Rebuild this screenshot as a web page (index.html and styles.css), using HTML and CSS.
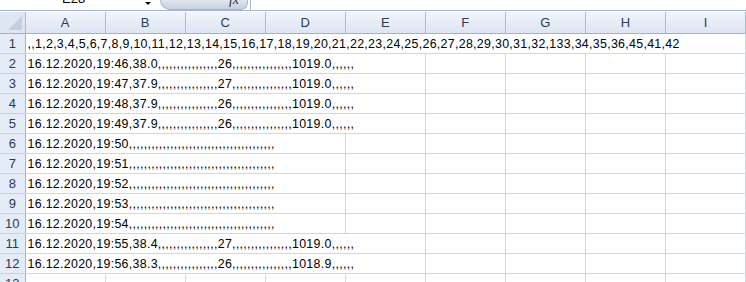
FILE: index.html
```html
<!DOCTYPE html>
<html lang="de">
<head>
    <meta charset="UTF-8">
    <meta name="viewport" content="width=device-width, initial-scale=1.0">
    <title>Tabelle</title>
    <link rel="stylesheet" href="styles.css">
</head>
<body>
    <div class="formula-bar">
        <div class="name-box">
            <span class="name-text">E28</span>
            <span class="name-arrow"></span>
        </div>
        <div class="fx-button"><span class="fx">fx</span></div>
        <div class="formula-input"></div>
    </div>

    <table class="sheet">
        <colgroup>
            <col class="col-head">
            <col><col><col><col><col><col><col><col><col>
        </colgroup>
        <thead>
            <tr>
                <th class="corner"><span class="corner-tri"></span></th>
                <th>A</th><th>B</th><th>C</th><th>D</th><th>E</th><th>F</th><th>G</th><th>H</th><th>I</th>
            </tr>
        </thead>
        <tbody id="rows"></tbody>
    </table>

    <script>
        // Zeilen der CSV-Datei, alles steht in Spalte A und läuft in die Nachbarzellen
        const empty = n => ','.repeat(n);
        const full = (time, temp, hum, press) =>
            '16.12.2020,' + time + ',' + temp + empty(16) + hum + empty(16) + press + empty(6);
        const blank = time => '16.12.2020,' + time + empty(39);

        // [Text, Anzahl der überdeckten Spalten]
        const lines = [
            [',,1,2,3,4,5,6,7,8,9,10,11,12,13,14,15,16,17,18,19,20,21,22,23,24,25,26,27,28,29,30,31,32,133,34,35,36,45,41,42', 9],
            [full('19:46', '38.0', '26', '1019.0'), 5],
            [full('19:47', '37.9', '27', '1019.0'), 5],
            [full('19:48', '37.9', '26', '1019.0'), 5],
            [full('19:49', '37.9', '26', '1019.0'), 5],
            [blank('19:50'), 4],
            [blank('19:51'), 4],
            [blank('19:52'), 4],
            [blank('19:53'), 4],
            [blank('19:54'), 4],
            [full('19:55', '38.4', '27', '1019.0'), 5],
            [full('19:56', '38.3', '26', '1018.9'), 5],
            ['', 1]
        ];

        const tbody = document.getElementById('rows');
        lines.forEach(([text, span], i) => {
            const tr = document.createElement('tr');
            tr.innerHTML = `<th class="row-num">${i + 1}</th><td class="text-cell" colspan="${span}">${text}</td>` +
                '<td></td>'.repeat(9 - span);
            tbody.appendChild(tr);
        });
    </script>
</body>
</html>
```

FILE: styles.css
```css
body {
    margin: 0;
    background-color: #fff;
    font-family: "Liberation Sans", Arial, sans-serif;
    overflow: hidden;
}

/* Formelleiste, oben abgeschnitten */
.formula-bar {
    display: flex;
    height: 10px;
    border-bottom: 1px solid #a5b6cb;
    overflow: hidden;
}

.name-box {
    width: 152px;
    position: relative;
    flex: none;
}

.name-text {
    position: absolute;
    left: 62px;
    top: -9px;
    font-size: 13px;
    color: #000;
}

.name-arrow {
    position: absolute;
    left: 145px;
    top: 2px;
    border-left: 3px solid transparent;
    border-right: 3px solid transparent;
    border-top: 3px solid #000;
}

.fx-button {
    width: 86px;
    margin-left: 8px;
    flex: none;
    background: linear-gradient(to bottom, #dfe6ef, #c6d2e0);
    border: 1px solid #a7b6c9;
    border-top: none;
    border-radius: 0 0 10px 14px;
    position: relative;
}

.fx {
    position: absolute;
    right: 8px;
    top: -8px;
    font-family: "Liberation Serif", serif;
    font-style: italic;
    font-size: 14px;
    color: #333;
}

.formula-input {
    flex: 1;
    border-left: 1px solid #a5b6cb;
    margin-left: 2px;
}

/* Tabellenraster */
.sheet {
    border-collapse: collapse;
    table-layout: fixed;
    width: 746px;
    margin-top: 1px;
}

.sheet col {
    width: 80px;
}

.sheet col.col-head {
    width: 25px;
}

thead th {
    height: 21px;
    padding: 0;
    font-weight: normal;
    font-size: 13px;
    color: #2c3b50;
    background: linear-gradient(to bottom, #f1f5fb, #dce5f2);
    border-right: 1px solid #a9bcd3;
    border-bottom: 1px solid #9eb3ca;
}

th.corner {
    position: relative;
    background: #dde6f2;
}

.corner-tri {
    position: absolute;
    right: 3px;
    bottom: 3px;
    border-left: 14px solid transparent;
    border-bottom: 14px solid #c3cfdf;
}

th.row-num {
    height: 19px;
    padding: 0;
    font-weight: normal;
    font-size: 13px;
    color: #2c3b50;
    background-color: #e4ecf7;
    border-right: 1px solid #9eb6ce;
    border-bottom: 1px solid #c5d2e3;
    text-align: center;
}

td {
    height: 19px;
    padding: 0;
    border-right: 1px solid #d0d7e5;
    border-bottom: 1px solid #d0d7e5;
}

td.text-cell {
    padding-left: 2px;
    font-size: 12.4px;
    letter-spacing: 0.3px;
    color: #000;
    white-space: nowrap;
    overflow: hidden;
    vertical-align: bottom;
    line-height: 18px;
}
```
